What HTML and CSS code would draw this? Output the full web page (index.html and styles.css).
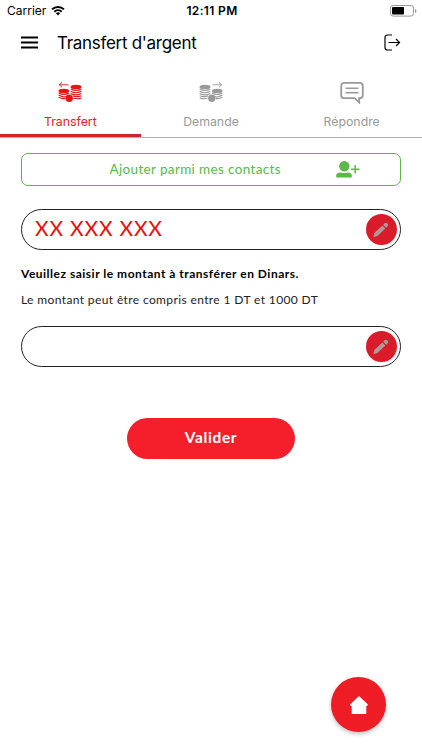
FILE: index.html
```html
<!DOCTYPE html>
<html lang="fr">
<head>
<meta charset="UTF-8">
<meta name="viewport" content="width=device-width, initial-scale=1.0">
<title>Transfert d'argent</title>
<link rel="stylesheet" href="styles.css">
</head>
<body>
  <div class="status-bar">
    <div class="carrier">
      <span>Carrier</span>
      <svg width="14" height="11" viewBox="0 0 14 11">
        <path d="M0.3 3.7a9.6 9.6 0 0 1 13.4 0l-1.4 1.4a7.6 7.6 0 0 0-10.6 0z"/>
        <path d="M2.6 6a6.2 6.2 0 0 1 8.8 0l-1.4 1.4a4.3 4.3 0 0 0-6 0z"/>
        <path d="M4.9 8.3a3 3 0 0 1 4.2 0L7 10.4z"/>
      </svg>
    </div>
    <span class="time">12:11 PM</span>
    <svg class="battery" width="27" height="12" viewBox="0 0 27 12">
      <rect x="0.5" y="0.5" width="23" height="10.6" rx="2.6" fill="#fff" stroke="#999"/>
      <rect x="2" y="2" width="12" height="7.6" rx="1"/>
      <path d="M25 4v4q1.5-.6 1.5-2t-1.5-2z" fill="#999"/>
    </svg>
  </div>

  <header class="header">
    <svg width="17" height="13" viewBox="0 0 17 13">
      <path d="M0 1.500h17M0 6.500h17M0 11.500h17" stroke="#000" stroke-width="2.200"/>
    </svg>
    <h1>Transfert d'argent</h1>
    <svg class="logout" width="17" height="17" viewBox="0 0 17 17">
      <path d="M8 1H3.500Q1 1 1 3.500v10Q1 16 3.500 16H8M4.500 8.500h11M12 5l3.500 3.500L12 12" fill="none" stroke="#000" stroke-width="1.200"/>
    </svg>
  </header>

  <nav class="tabs">
    <a class="tab active">
      <svg width="24" height="22" viewBox="0 0 24 22" fill="none" stroke="currentColor">
        <path d="M10.500 2.800H1.300M4 .3L1.300 2.800 4 5.300" stroke-width=".9"/>
        <g fill="currentColor" stroke="none">
          <ellipse cx="5.800" cy="9" rx="5.400" ry="2.300"/>
          <ellipse cx="18" cy="5" rx="5.500" ry="2.300"/>
          <circle cx="11.200" cy="16.200" r="3.700"/>
        </g>
        <path d="M.6 11q5.200 3 10.400 0M.6 13.100q4.700 2.600 7.500 1.500M.6 15.200q3.700 2 6.500 1.200M12.700 7q5.300 3 10.600 0M12.700 9.200q5.300 3 10.600 0M12.700 11.400q5.300 3 10.600 0M15 14q4.500 1.300 8.300-.3M15.500 16.300q4.500 1.100 7.800-.4" stroke-width="1.100"/>
      </svg>
      <span>Transfert</span>
    </a>
    <a class="tab">
      <svg width="24" height="22" viewBox="0 0 24 22" fill="none" stroke="currentColor">
        <path d="M13.500 2.800h9.200M20 .3l2.700 2.500L20 5.300" stroke-width=".9"/>
        <g fill="currentColor" stroke="none">
          <ellipse cx="6" cy="5" rx="5.500" ry="2.300"/>
          <ellipse cx="18.200" cy="9" rx="5.400" ry="2.300"/>
          <circle cx="12.800" cy="16.200" r="3.700"/>
        </g>
        <path d="M23.400 11q-5.200 3-10.400 0M23.400 13.100q-4.700 2.600-7.500 1.500M23.400 15.200q-3.700 2-6.500 1.200M11.300 7q-5.300 3-10.600 0M11.300 9.200q-5.300 3-10.600 0M11.300 11.400q-5.300 3-10.600 0M9 14q-4.500 1.300-8.300-.3M8.500 16.300q-4.500 1.100-7.800-.4" stroke-width="1.100"/>
      </svg>
      <span>Demande</span>
    </a>
    <a class="tab">
      <svg width="24" height="22" viewBox="0 0 24 22" fill="none" stroke="currentColor" stroke-width="1.800">
        <path d="M4.500 .9h15q3.300 0 3.300 3.300v8.700q0 3.300-3.300 3.300h-.3v4.300l-4.700-4.300h-10q-3.300 0-3.300-3.300V4.200Q1.200 .9 4.500 .9z"/>
        <path d="M5.500 6.300h13M5.500 10.800h13" stroke-width="1.500"/>
      </svg>
      <span>Répondre</span>
    </a>
  </nav>

  <main class="content">
    <button class="add-contact">
      <span>Ajouter parmi mes contacts</span>
      <svg width="24" height="17" viewBox="0 0 24 17">
        <circle cx="8.300" cy="5.300" r="5.200"/>
        <path d="M.2 16.500v-2.200q0-2.500 4-2.900 4 1.400 8 0 3.600.4 3.600 2.900v2.200z"/>
        <path d="M19.200 4v8.600M15 8.300h8.500" stroke="#5cb849" stroke-width="1.500"/>
      </svg>
    </button>

    <div class="field phone">
      <span>XX XXX XXX</span>
      <div class="edit">
        <svg width="16" height="16" viewBox="0 0 16 16">
          <path d="M.4 15.200l.9-4.100 8.100-7.600 2.900 3-7.900 7.600zM10.200 2.800l1.700-1.700q1-.8 1.900 0l1 1q.9 1 0 1.900l-1.700 1.700z"/>
          <path d="M3 12.500l7.500-7.200" stroke="#c4888a" stroke-width=".6"/>
        </svg>
      </div>
    </div>

    <p class="label">Veuillez saisir le montant à transférer en Dinars.</p>
    <p class="hint">Le montant peut être compris entre 1 DT et 1000 DT</p>

    <div class="field">
      <div class="edit">
        <svg width="16" height="16" viewBox="0 0 16 16">
          <path d="M.4 15.200l.9-4.100 8.100-7.600 2.900 3-7.900 7.600zM10.200 2.800l1.700-1.700q1-.8 1.900 0l1 1q.9 1 0 1.900l-1.700 1.700z"/>
          <path d="M3 12.500l7.500-7.200" stroke="#c4888a" stroke-width=".6"/>
        </svg>
      </div>
    </div>

    <button class="submit">Valider</button>
  </main>

  <a class="home">
    <svg width="18" height="18" viewBox="0 0 18 18">
      <path d="M9 0l9 8.500-1 1.500h-.7v8H1.700v-8H1L0 8.500z"/>
    </svg>
  </a>
</body>
</html>
```
FILE: styles.css
```css
* {
  box-sizing: border-box;
}
body {
  margin: 0;
  height: 750px;
  overflow: hidden;
  background-color: #fff;
  color: #000;
  font-family: Inter, sans-serif;
}
svg {
  display: block;
  flex-shrink: 0;
}
button {
  font-family: inherit;
  padding: 0;
}
.status-bar {
  display: grid;
  grid-template-columns: 1fr auto 1fr;
  align-items: center;
  height: 21px;
  padding: 0 5px 0 7px;
  font-size: 12px;
}
.carrier {
  display: flex;
  align-items: center;
  gap: 5px;
}
.time {
  font-weight: 600;
  letter-spacing: .35px;
}
.battery {
  justify-self: end;
}
.header {
  display: flex;
  align-items: center;
  height: 43px;
  padding: 0 21px;
}
.header h1 {
  margin: 0 0 0 19px;
  font-size: 17px;
  font-weight: 400;
  letter-spacing: -.3px;
}
.logout {
  margin-left: auto;
}
.tabs {
  display: grid;
  grid-template-columns: 1fr 1fr 1fr;
  height: 74px;
  border-bottom: 1px solid #b4b4b4;
}
.tab {
  display: flex;
  flex-direction: column;
  align-items: center;
  gap: 10px;
  height: 73px;
  padding-top: 18px;
  color: #999;
  font-size: 12.300px;
  line-height: 16px;
}
.tab.active {
  color: #e01f26;
  border-bottom: 3px solid #d2232a;
}
.tab.active svg {
  color: #ee1111;
}
.content {
  display: flex;
  flex-direction: column;
  padding: 15px 21px 0;
  font-family: Lato, sans-serif;
}
.add-contact {
  display: flex;
  align-items: center;
  justify-content: flex-end;
  gap: 55px;
  height: 33px;
  padding-right: 40px;
  border: 1px solid #5cb849;
  border-radius: 7px;
  background: #fff;
  color: #5cb849;
  fill: #5cb849;
  font-size: 13.500px;
  letter-spacing: .36px;
}
.add-contact span {
  padding-bottom: 2px;
}
.field {
  display: flex;
  align-items: center;
  justify-content: flex-end;
  height: 41px;
  padding: 0 3.500px 0 13px;
  border: 1px solid #222;
  border-radius: 21px;
}
.phone {
  justify-content: space-between;
  margin-top: 23px;
  color: #ee0c0c;
  font-size: 21px;
  letter-spacing: .8px;
}
.phone span {
  padding-bottom: 4px;
}
.edit {
  display: flex;
  align-items: center;
  justify-content: center;
  width: 31px;
  height: 31px;
  border-radius: 50%;
  background-color: #da1b29;
  fill: #ad9a9a;
}
.label {
  margin: 16px 0 0;
  font-size: 12px;
  font-weight: 700;
  line-height: 16px;
  letter-spacing: .5px;
}
.hint {
  margin: 10px 0 18px;
  font-size: 12px;
  line-height: 16px;
  letter-spacing: .38px;
  color: #222;
}
.submit {
  align-self: center;
  width: 168px;
  height: 41px;
  margin-top: 51px;
  padding-bottom: 4px;
  border: 0;
  border-radius: 21px;
  background-color: #f41f2b;
  color: #fff;
  font-size: 15.500px;
  font-weight: 700;
  letter-spacing: .6px;
}
/* stays in the corner over the page */
.home {
  position: absolute;
  right: 36px;
  bottom: 18px;
  display: flex;
  align-items: center;
  justify-content: center;
  width: 55px;
  height: 55px;
  border-radius: 50%;
  background-color: #ee1c25;
  box-shadow: 0 2px 4px rgba(0, 0, 0, .25);
  fill: #fff;
}
```
